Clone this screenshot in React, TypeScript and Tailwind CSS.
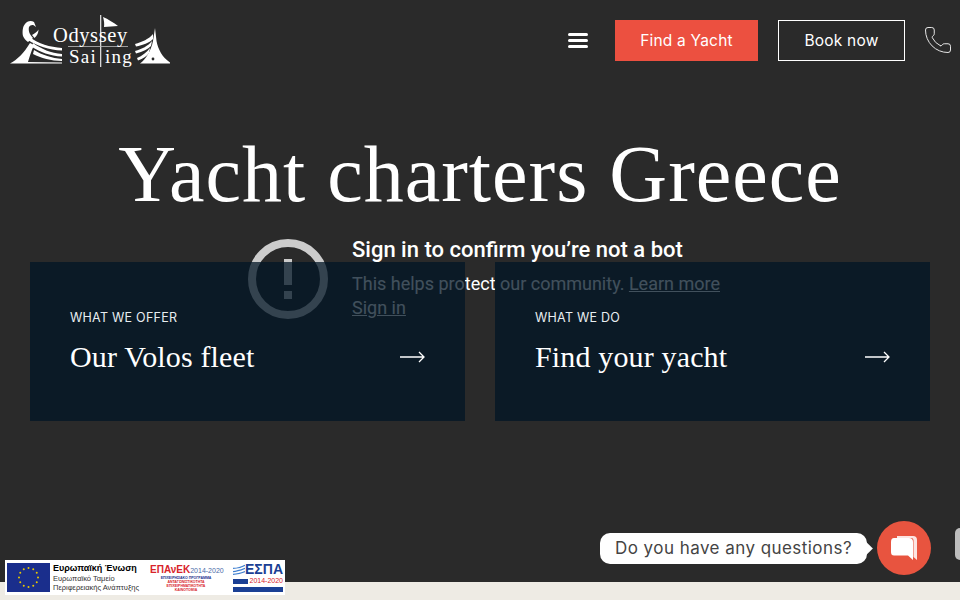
import { Phone } from 'lucide-react'

const sans = "font-['Inter','Liberation_Sans',sans-serif]"
const serif = "font-['Liberation_Serif',serif]"

function Logo() {
  return (
    <svg width="160" height="55" viewBox="0 0 160 55" className="shrink-0" fill="#fff">
      {/* left ship */}
      <path d="M0 50.5 C7 47 14 40 20 30 L24 32 C21 39 19 45 18 49 L52 49.5 V50.5Z" />
      <path d="M13 23 C12 18 13 13 15 11 C17 8 21 7 24 9 L26 14 L24 12.5 C22 11.5 20 12.5 19 14 C18 18 20 22 23 25 L18 29 C15 27 14 25 13 23Z" />
      <path d="M22 22 C25 20 27 19 28.5 16.5 C28.5 20 27 23 24.5 25Z" />
      <path d="M20 24 C28 31 40 34 52 35 V37.5 C39 37 27 33 18 27Z" />
      <path d="M23 30 C31 36 41 40 52 41 V43.5 C40 43 30 39 22 34Z" />
      <path d="M24 37 C32 42 42 45 52 46 V48 C41 48 31 45 23 41Z" />
      {/* mast and flag */}
      <rect x="90" y="2" width="1.3" height="52" fill="#d8d8d8" />
      <path d="M93 4 C98 6 104 10 108 13 L94 14 C94.5 11 94 7 93 4Z" />
      <rect x="58" y="33" width="60" height="0.8" fill="#bbb" />
      <text x="43" y="29" fontFamily="'Liberation Serif', serif" fontSize="20.5" letterSpacing="0.6">Odyssey</text>
      <text x="59" y="50" fontFamily="'Liberation Serif', serif" fontSize="19" letterSpacing="1.2">Sai</text>
      <text x="95" y="50" fontFamily="'Liberation Serif', serif" fontSize="19" letterSpacing="1.2">ing</text>
      {/* right ship */}
      <path d="M145 15 L146.5 28 C148 36 152 44 160 49.5 V50.5 L130 50.5 C136 46 141 38 143 28Z" />
      <path d="M143 21 C139 26 132 29 125 31 L126 33.5 C133 32 139 30 143 26Z" />
      <path d="M142 28 C138 33 132 36 125 38 L126 40.5 C133 39 138 36 141 33Z" />
      <path d="M140 35 C137 39 132 43 127 45 L128 47.5 C133 46 137 43 139 40Z" />
      <circle cx="143" cy="46" r="1.4" fill="#2a2a2a" />
    </svg>
  )
}

function Card({ label, title }: { label: string; title: string }) {
  return (
    <div className="relative z-20 h-[159px] w-[435px] bg-[#021626]/75 pl-10 pr-10 pt-[46px]">
      <div className={`${sans} text-[12.5px] leading-5 tracking-[0.25px] uppercase text-[#e8edf0]`}>{label}</div>
      <div className="mt-[9px] flex items-center justify-between">
        <span className={`${serif} text-[30px] leading-10 tracking-[0.15px] text-white`}>{title}</span>
        <svg width="25" height="12" viewBox="0 0 25 12" fill="none" stroke="#fff" strokeWidth="1.3">
          <path d="M0 6 H24 M19 1 L24 6 L19 11" />
        </svg>
      </div>
    </div>
  )
}

function EuBanner() {
  return (
    <div className="absolute bottom-[5px] left-[5px] z-30 flex h-[35px] w-[280px] items-center bg-white pl-[2px]">
      <div className="h-[29px] w-[43px] shrink-0 bg-[#1a2e8c]">
        <svg width="43" height="29" viewBox="0 0 43 29" fill="#e8c800">
          {[0, 30, 60, 90, 120, 150, 180, 210, 240, 270, 300, 330].map((a) => (
            <circle
              key={a}
              cx={21.5 + 9.5 * Math.cos((a * Math.PI) / 180)}
              cy={14.5 + 9.5 * Math.sin((a * Math.PI) / 180)}
              r="1"
            />
          ))}
        </svg>
      </div>
      <div className="ml-[3px] w-[90px] shrink-0 font-['Liberation_Sans',sans-serif] text-[7.5px] leading-[9.5px] text-[#333]">
        <div className="text-[9px] leading-[11px] font-bold whitespace-nowrap text-black">Ευρωπαϊκή Ένωση</div>
        <div>Ευρωπαϊκό Ταμείο</div>
        <div className="whitespace-nowrap">Περιφερειακής Ανάπτυξης</div>
      </div>
      <div className="ml-[7px] w-[72px] shrink-0 text-center font-['Liberation_Sans',sans-serif]">
        <div className="flex items-baseline justify-between whitespace-nowrap leading-[11px]">
          <span className="text-[10px] font-bold text-[#d8232a]">ΕΠΑνΕΚ</span>
          <span className="text-[7px] text-[#4a6aa8]">2014-2020</span>
        </div>
        <div className="text-[3.5px] leading-[4px] font-bold text-[#1a2e8c]">ΕΠΙΧΕΙΡΗΣΙΑΚΟ ΠΡΟΓΡΑΜΜΑ</div>
        <div className="text-[3.5px] leading-[4px] font-bold text-[#d8232a]">ΑΝΤΑΓΩΝΙΣΤΙΚΟΤΗΤΑ</div>
        <div className="text-[3.5px] leading-[4px] font-bold text-[#d8232a]">ΕΠΙΧΕΙΡΗΜΑΤΙΚΟΤΗΤΑ</div>
        <div className="text-[3.5px] leading-[4px] font-bold text-[#d8232a]">ΚΑΙΝΟΤΟΜΙΑ</div>
      </div>
      <div className="ml-[11px] w-[50px] shrink-0 font-['Liberation_Sans',sans-serif]">
        <div className="flex items-center justify-between">
          <svg width="15" height="12" viewBox="0 0 15 12" fill="none" stroke="#3f7fd0" strokeWidth="1.6">
            <path d="M0 4 C5 4 10 3 15 0 M0 8 C5 8 10 6 15 4 M0 11.5 C5 11.5 10 10 15 8" />
          </svg>
          <span className="text-[14px] leading-[13px] font-bold text-[#1a3f94]">ΕΣΠΑ</span>
        </div>
        <div className="flex items-center justify-between">
          <span className="h-[5px] w-[15px] bg-[#1a3f94]" />
          <span className="text-[7px] leading-[10px] text-[#d8232a]">2014-2020</span>
        </div>
        <div className="mt-[1px] h-[5px] w-full bg-[#1a3f94]" />
      </div>
    </div>
  )
}

export default function App() {
  return (
    <div className="relative flex h-[600px] w-full flex-col overflow-hidden bg-[#2a2a2a]">
      <div className="relative h-[582px] shrink-0">
        {/* header */}
        <header className="relative z-20 flex h-[81px] items-center pl-[10px] pr-[7px]">
          <Logo />
          <div className="ml-auto flex items-center">
            <div className="flex w-5 flex-col gap-[3px]">
              <span className="h-[3px] rounded-full bg-white" />
              <span className="h-[3px] rounded-full bg-white" />
              <span className="h-[3px] rounded-full bg-white" />
            </div>
            <button className={`${sans} ml-[27px] h-[41px] w-[143px] bg-[#ec5040] text-[15.5px] tracking-[0.2px] text-white`}>Find a Yacht</button>
            <button className={`${sans} ml-5 h-[41px] w-[127px] border border-white text-[15.5px] tracking-[0.2px] text-white`}>Book now</button>
            <Phone size={30} strokeWidth={0.8} className="mb-[2px] ml-[18px] text-[#e6e6e6]" />
          </div>
        </header>

        <h1 className={`${serif} mt-[43px] text-center text-[80px] leading-[100px] tracking-[1px] text-white`}>Yacht charters Greece</h1>

        {/* youtube bot message, sits under the cards */}
        <div className="absolute left-[248px] top-[239px] z-10 flex font-['Roboto',sans-serif]">
          <svg width="80" height="80" viewBox="0 0 80 80" fill="none" className="shrink-0">
            <circle cx="40" cy="40" r="36" stroke="#ccc" strokeWidth="8" />
            <rect x="36" y="20" width="8" height="26" fill="#ccc" />
            <rect x="36" y="52" width="8" height="8" fill="#ccc" />
          </svg>
          <div className="ml-6 whitespace-nowrap text-white">
            <div className="text-[22px] leading-[22px] font-medium">Sign in to confirm you’re not a bot</div>
            <div className="mt-[11px] text-[18px] leading-[24px]">
              This helps protect our community. <span className="underline">Learn more</span>
            </div>
            <div className="text-[18px] leading-[24px] underline">Sign in</div>
          </div>
        </div>

        <div className="mt-[38px] flex justify-between pl-[30px] pr-[30px]">
          <Card label="What we offer" title="Our Volos fleet" />
          <Card label="What we do" title="Find your yacht" />
        </div>

        {/* chat widget */}
        <div className="absolute left-[600px] top-[533px] z-30 flex h-[31px] w-[267px] items-center rounded-[10px] bg-white pl-[15px]">
          <span className={`${sans} text-[17px] tracking-[0.45px] whitespace-nowrap text-[#444]`}>Do you have any questions?</span>
          <span className="absolute right-[-4px] top-[11px] h-[9px] w-[9px] rotate-45 bg-white" />
        </div>
        <div className="absolute left-[877px] top-[521px] z-30 flex h-[54px] w-[54px] items-center justify-center rounded-full bg-[#e8543f]">
          <svg width="30" height="30" viewBox="0 0 30 30" fill="#fff">
            <path d="M8 3 H24 Q28 3 28 7 V27 L24.5 24 V7 Q24.5 5 22 5 H8Z" opacity="0.85" />
            <path d="M5 5 H20 Q24 5 24 9 V27 L19 22.5 H5 Q2 22.5 2 19 V9 Q2 5 5 5Z" />
          </svg>
        </div>
        <div className="absolute left-[955px] top-[528px] z-30 h-[32px] w-[10px] rounded-[6px] bg-[#bdbdbd]" />
      </div>

      <div className="flex-1 bg-[#eeebe4]" />
      <EuBanner />
    </div>
  )
}
